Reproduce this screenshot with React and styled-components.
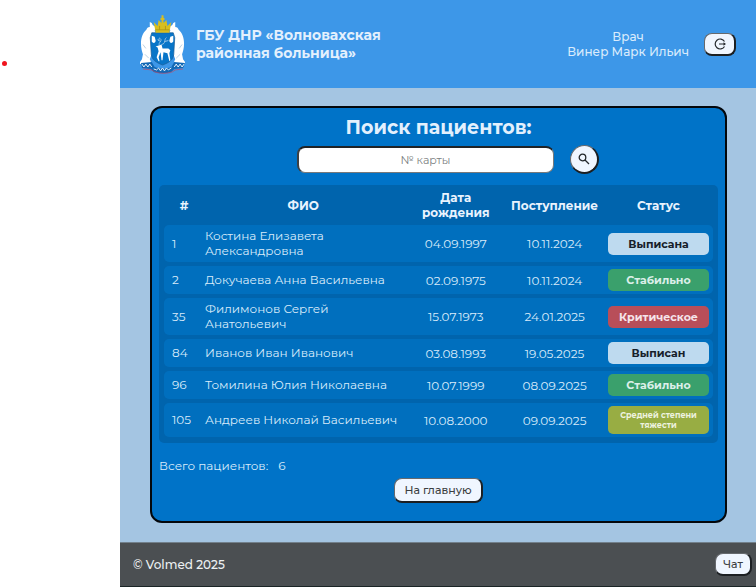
import React from "react";
import styled, { createGlobalStyle } from "styled-components";

const Global = createGlobalStyle`
  *, *::before, *::after { box-sizing: border-box; }
  body { margin: 0; background: #fff; }
  body, button, input { font-family: Montserrat, Inter, "Noto Sans", sans-serif; }
`;

const Page = styled.div`
  display: grid;
  grid-template-columns: 120px minmax(0, 1fr);
  min-height: 100vh;
`;

const Gutter = styled.aside`
  padding: 61px 2px;
  background: #fff;
`;

const Dot = styled.div`
  width: 5px;
  height: 5px;
  border-radius: 50%;
  background: #f0141e;
`;

const App = styled.div`
  display: grid;
  grid-template-rows: auto 1fr auto;
  background: #a4c5e2;
  color: #d9ebfa;
`;

const Header = styled.header`
  display: flex;
  align-items: center;
  justify-content: space-between;
  min-height: 88px;
  padding: 0 20px;
  background: #3d97e8;
`;

const Brand = styled.div`
  display: flex;
  align-items: center;
  gap: 10px;
`;

const Crest = styled.svg`
  width: 46px;
  height: 59px;
`;

const Hospital = styled.p`
  margin: 0;
  font-size: 14px;
  font-weight: 700;
  line-height: 18px;
  color: #e3f0fd;
`;

const Account = styled.div`
  display: flex;
  align-items: center;
  gap: 15px;
`;

const Doctor = styled.p`
  margin: 0;
  font-size: 12px;
  font-weight: 500;
  line-height: 15px;
  text-align: center;
  color: #d9ebfc;
`;

const Button = styled.button`
  display: inline-flex;
  align-items: center;
  justify-content: center;
  height: ${(p) => (p.$tall ? "25px" : "23px")};
  padding: 0 ${(p) => (p.$roomy ? "9px" : "7px")};
  border: solid;
  border-width: 1px 2px 2px 1px;
  border-color: #66696d #1c1f22 #1c1f22 #66696d;
  border-radius: 8px;
  background: #f0f6ff;
  color: #3c3f42;
  font-size: 11px;
  font-weight: 500;
`;

const ExitButton = styled(Button)`
  width: 32px;
  padding: 0;
`;

const Main = styled.main`
  padding: 18px 29px 19px 30px;
`;

const Panel = styled.section`
  display: flex;
  flex-direction: column;
  height: 100%;
  padding: 8px 7px 18px;
  border: 2px solid #03070b;
  border-radius: 12px;
  background: #0073c8;
`;

const Title = styled.h1`
  margin: 0;
  font-size: 19px;
  font-weight: 700;
  line-height: 24px;
  text-align: center;
  color: #e3f0fd;
`;

const Search = styled.form`
  display: flex;
  align-items: center;
  justify-content: center;
  gap: 16px;
  margin: 5px 0 11px 18px;
`;

const CardInput = styled.input`
  width: 257px;
  height: 27px;
  border: solid;
  border-width: 2px 1px 1px 2px;
  border-color: #202326 #77797b #77797b #3d4043;
  border-radius: 8px;
  background: #fff;
  font-size: 11px;
  text-align: center;
  &::placeholder { color: #7c7f82; }
`;

const RoundButton = styled(Button)`
  width: 29px;
  height: 29px;
  padding: 0;
  border-radius: 50%;
`;

const TableBox = styled.div`
  padding: 0 5px 2px;
  border-radius: 5px;
  background: #0064ad;
`;

const Table = styled.table`
  width: 100%;
  table-layout: fixed;
  border-spacing: 0 4px;
  font-size: 12px;
  line-height: 15px;
`;

const Col = styled.col`
  width: ${(p) => p.$width};
`;

const Th = styled.th`
  height: 32px;
  padding: 0 4px;
  font-size: 12px;
  font-weight: 700;
  color: #e9f3fe;
  &:first-child { padding-left: 8px; }
`;

const Td = styled.td`
  padding: 3px 4px;
  background: #006fbe;
  text-align: center;
  &:first-child { border-radius: 5px 0 0 5px; }
  &:last-child { border-radius: 0 5px 5px 0; }
`;

const TextTd = styled(Td)`
  padding: 3px 2px 4px ${(p) => p.$inset};
  text-align: left;
`;

const tones = {
  out: ["#bedaef", "#16202a"],
  stable: ["#3aa06c", "#dcefe9"],
  critical: ["#b84e59", "#f5e4ea"],
  medium: ["#98ad43", "#edf2df"],
};

const Status = styled.span`
  display: block;
  padding: ${(p) => (p.$small ? "4px" : "3px")} 4px;
  border-radius: 5px;
  background: ${(p) => tones[p.$tone][0]};
  color: ${(p) => tones[p.$tone][1]};
  font-size: ${(p) => (p.$small ? "8px" : "11px")};
  font-weight: 700;
  line-height: ${(p) => (p.$small ? "10px" : "16px")};
`;

const Total = styled.p`
  display: flex;
  gap: 10px;
  margin: 14px 0 4px;
  font-size: 12px;
  line-height: 17px;
`;

const Actions = styled.div`
  display: flex;
  justify-content: center;
`;

const Footer = styled.footer`
  display: flex;
  align-items: center;
  justify-content: space-between;
  min-height: 46px;
  padding: 0 4px 0 13px;
  border-top: 1px solid #72808b;
  border-bottom: 2px solid #1b2526;
  background: #4b4f52;
  color: #edf1f3;
  font-size: 12px;
  font-weight: 500;
`;

const Bear = () => (
  <g>
    <path
      d="M10 12c-2 0-3 1-3.500 3C3 18 1 23 1 29c0 5 1 8 2 11l-1 5-2 3v2h11v-3l-1-2 3-8 1-9c2 0 3-1 3-3v-5l-2-4 1-4-3-2-1-2-2-1z"
      fill="#fff"
    />
    <path d="M5 40l4 4M3 30l3 4" fill="none" stroke="#b8cfe2" strokeWidth="1" />
  </g>
);

const CrestIcon = () => (
  <Crest viewBox="0 0 47 60" role="img" aria-label="Герб">
    <Bear />
    <g transform="translate(46 0) scale(-1 1)"><Bear /></g>
    <path d="M12 18h22l1.500 5-1 17c-1 6-4 8-11.500 11C16 48 12.500 46 11.500 40l-1-17z" fill="#0875c8" stroke="#1a5c96" strokeWidth="0.700" />
    <path d="M12 27c1 2 4 2 4-1l-1-4-3-1zM34 27c-1 2-4 2-4-1l1-4 3-1z" fill="#fff" />
    <path d="M14 7l4 4 1-6 3 3V5h-1V3h1V0h2v3h1v2h-1v3l3-3 1 6 4-4-2 11H16z" fill="#d8be20" />
    <path d="M16 15h14M20 11v4M26 11v4" fill="none" stroke="#a98f16" strokeWidth="0.800" />
    <path
      d="M19 31l3-1 1 4 6 0 2 2-1 3 1 7-1 1-2-8-4-1-1 8h-1l-1-8-2 5 1 4h-1l-2-4 2-6-1-4-2-1z"
      fill="#fff"
    />
    <path d="M20 31c-2-3 3-4 1-7m0 3-3-2m4 5c5-1 2-5 5-7m-2 4 4-1m-9-3-1 3" fill="none" stroke="#b4d3ec" strokeWidth="0.800" />
    <path d="M1 49l11-1 3 5c5 2 12 2 17 0l3-5 11 1-2 5-9 1-3 3c-6 2-12 2-18 0l-3-3-9-1z" fill="#1268b5" />
    <path d="M2 50l2 3 2-3 2 3 2-3 2 3M35 53l2-3 2 3 2-3 2 3 2-3M14 55l3 1 2-2 2 3 2-3 2 3 2-3 2 2 3-2" fill="none" stroke="#e7f3fb" />
    <path d="M3 55l9 1 3 2c6 2 12 2 18 0l3-2 8-1" fill="none" stroke="#bf4965" strokeWidth="0.700" />
  </Crest>
);

const ExitIcon = () => (
  <svg width="14" height="14" viewBox="0 0 14 14" fill="none" stroke="#24282c" aria-hidden="true">
    <path d="M11.500 4.500A5 5 0 1 0 11.500 9.500M6 7H12" strokeWidth="1.200" />
    <path d="M10.500 5.200L13 7l-2.500 1.800z" fill="#24282c" stroke="none" />
  </svg>
);

const SearchIcon = () => (
  <svg width="12" height="12" viewBox="0 0 12 12" fill="none" stroke="#24282c" strokeWidth="1.300" aria-hidden="true">
    <circle cx="4.500" cy="4.500" r="3.300" />
    <path d="M7 7l4 4" />
  </svg>
);

const patients = [
  [1, "Костина Елизавета Александровна", "04.09.1997", "10.11.2024", "Выписана", "out"],
  [2, "Докучаева Анна Васильевна", "02.09.1975", "10.11.2024", "Стабильно", "stable"],
  [35, "Филимонов Сергей Анатольевич", "15.07.1973", "24.01.2025", "Критическое", "critical"],
  [84, "Иванов Иван Иванович", "03.08.1993", "19.05.2025", "Выписан", "out"],
  [96, "Томилина Юлия Николаевна", "10.07.1999", "08.09.2025", "Стабильно", "stable"],
  [105, "Андреев Николай Васильевич", "10.08.2000", "09.09.2025", "Средней степени тяжести", "medium"],
];

export default function VolmedPage() {
  return (
    <Page>
      <Global />
      <Gutter><Dot /></Gutter>
      <App>
        <Header>
          <Brand>
            <CrestIcon />
            <Hospital>ГБУ ДНР «Волновахская<br />районная больница»</Hospital>
          </Brand>
          <Account>
            <Doctor>Врач<br />Винер Марк Ильич</Doctor>
            <ExitButton type="button" aria-label="Выйти"><ExitIcon /></ExitButton>
          </Account>
        </Header>
        <Main>
          <Panel>
            <Title>Поиск пациентов:</Title>
            <Search onSubmit={(e) => e.preventDefault()}>
              <CardInput placeholder="№ карты" aria-label="№ карты" />
              <RoundButton type="submit" aria-label="Найти"><SearchIcon /></RoundButton>
            </Search>
            <TableBox>
              <Table>
                <colgroup>
                  <Col $width="36px" />
                  <Col />
                  <Col $width="18%" />
                  <Col $width="18%" />
                  <Col $width="109px" />
                </colgroup>
                <thead>
                  <tr>
                    <Th>#</Th>
                    <Th>ФИО</Th>
                    <Th>Дата рождения</Th>
                    <Th>Поступление</Th>
                    <Th>Статус</Th>
                  </tr>
                </thead>
                <tbody>
                  {patients.map(([id, name, born, admitted, status, tone]) => (
                    <tr key={id}>
                      <TextTd $inset="8px">{id}</TextTd>
                      <TextTd $inset="5px">{name}</TextTd>
                      <Td>{born}</Td>
                      <Td>{admitted}</Td>
                      <Td><Status $tone={tone} $small={tone === "medium"}>{status}</Status></Td>
                    </tr>
                  ))}
                </tbody>
              </Table>
            </TableBox>
            <Total><span>Всего пациентов:</span><span>{patients.length}</span></Total>
            <Actions><Button type="button" $tall $roomy>На главную</Button></Actions>
          </Panel>
        </Main>
        <Footer>
          <span>© Volmed 2025</span>
          <Button type="button">Чат</Button>
        </Footer>
      </App>
    </Page>
  );
}
